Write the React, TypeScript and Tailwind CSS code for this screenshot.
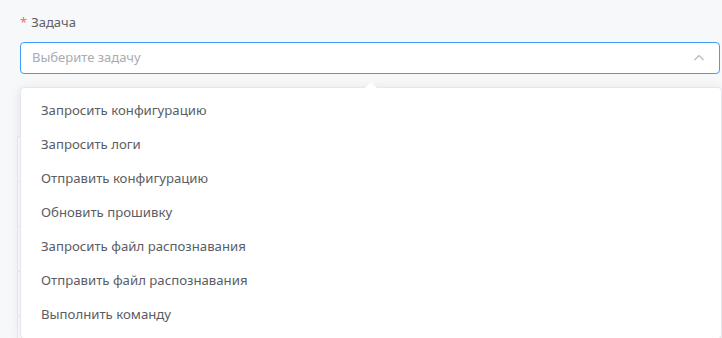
import React from "react";

const items = [
  "Запросить конфигурацию",
  "Запросить логи",
  "Отправить конфигурацию",
  "Обновить прошивку",
  "Запросить файл распознавания",
  "Отправить файл распознавания",
  "Выполнить команду",
];

export default function App() {
  return (
    <div
      className="relative w-[722px] h-[338px] overflow-hidden bg-[#f7f8fa]"
      style={{ fontFamily: '"Noto Sans", "Open Sans", sans-serif' }}
    >
      <div className="pl-5 pr-[2px] pt-[12px]">
        <div className="h-[22px] flex items-center text-[13px] text-[#606266]">
          <span className="text-[#f56c6c] mr-[4px]">*</span>
          <span>Задача</span>
        </div>
        <div className="mt-[8px] h-[32px] rounded-[4px] border border-[#409eff] bg-white flex items-center pl-[11px] pr-[13px]">
          <span className="flex-1 text-[13px] text-[#a8abb2]">Выберите задачу</span>
          <svg width="14" height="14" viewBox="0 0 14 14" fill="none">
            <path d="M2.5 9 L7 4.5 L11.5 9" stroke="#b4b7bd" strokeWidth="1.2" />
          </svg>
        </div>
        {/* background table behind */}
        <div className="mt-[62px] -ml-[3px] bg-white border border-[#ebeef5]">
          {[0, 1, 2, 3, 4].map((i) => (
            <div key={i} className="h-[45px] border-b border-[#ebeef5]" />
          ))}
        </div>
      </div>

      {/* dropdown */}
      <div className="absolute left-[20px] top-[87px] w-[702px] bg-white border border-[#e4e7ed] rounded-[4px] shadow-[0_2px_12px_0_rgba(0,0,0,0.1)] py-[6px]">
        <div className="absolute -top-[6px] left-[344px] w-0 h-0 border-x-[6px] border-x-transparent border-b-[6px] border-b-white" />
        {items.map((t) => (
          <div key={t} className="h-[34px] flex items-center px-[20px] text-[13.2px] text-[#5a5d63]">
            {t}
          </div>
        ))}
      </div>
    </div>
  );
}
